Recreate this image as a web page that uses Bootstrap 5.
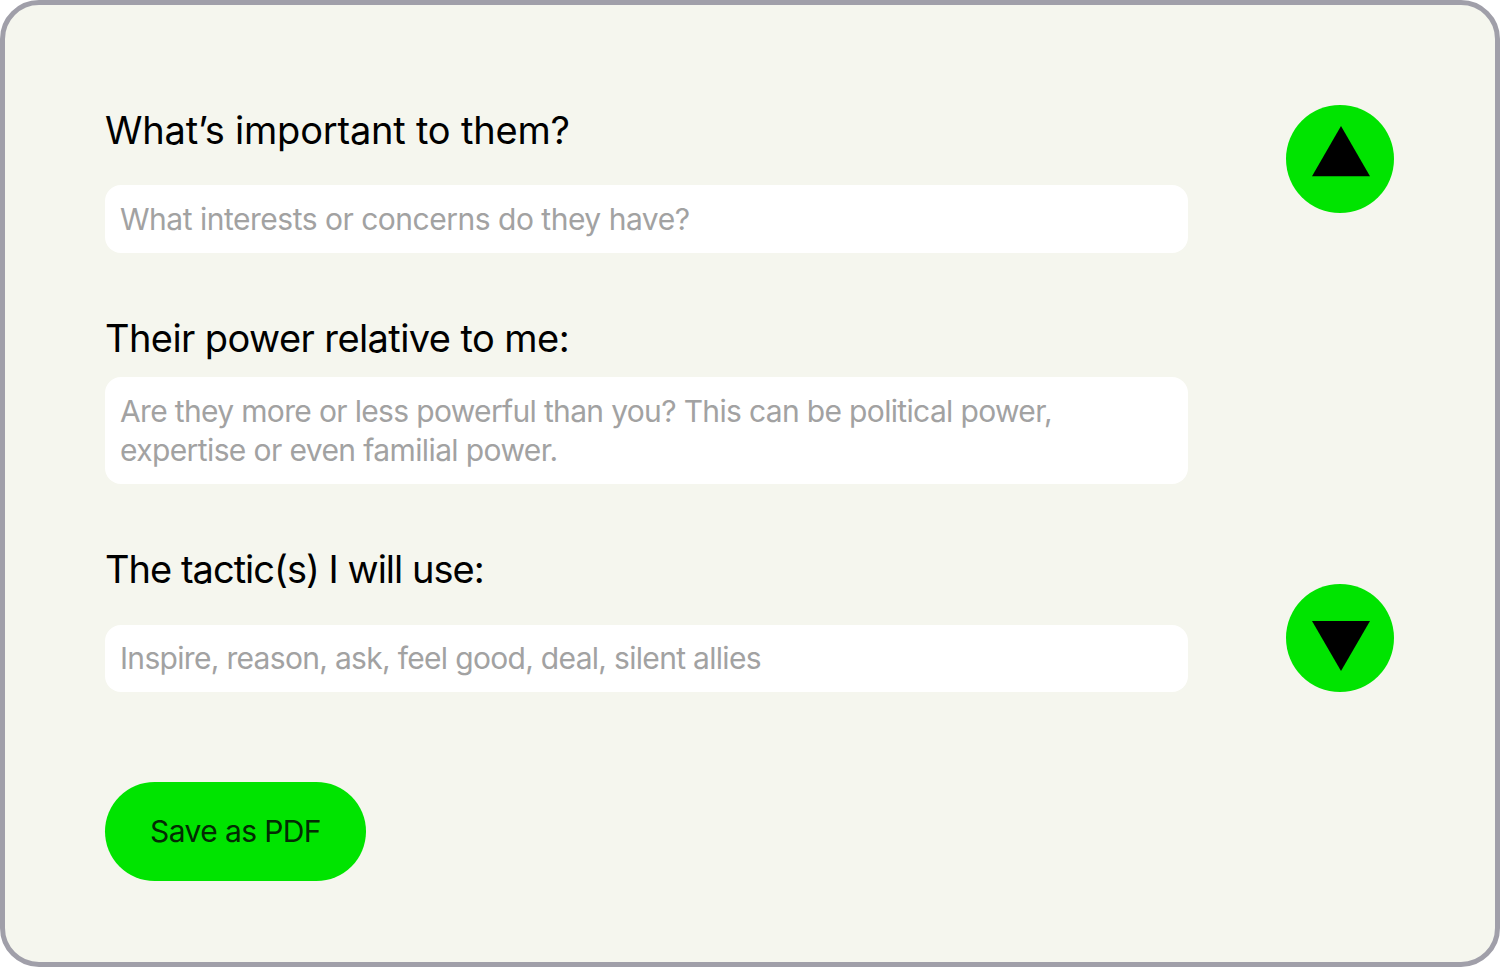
<!DOCTYPE html>
<html lang="en">
<head>
<meta charset="utf-8">
<meta name="viewport" content="width=device-width, initial-scale=1">
<title>Stakeholder planner</title>
<link href="https://cdn.jsdelivr.net/npm/bootstrap@5.3.0/dist/css/bootstrap.min.css" rel="stylesheet">
<style>
  body { font-family: Inter, "Liberation Sans", sans-serif; background: #fff; }
  .planner { height: 967px; border: 5px solid #a09fa9; border-radius: 39px; background: #f5f6ee; padding: 99px 101px 0 100px; overflow: hidden; }
  .fields { width: 1083px; }
  .question { font-size: 38px; line-height: 52px; color: #000; white-space: nowrap; font-weight: 400; }
  .answer { border: 0; border-radius: 16px; background: #fff; color: #a2a2a2; font-size: 30px; line-height: 38.5px; padding: 15px 15px; }
  .q1 { letter-spacing: -.2px; margin-bottom: 29px; }
  .q2 { letter-spacing: -.58px; margin: 59px 0 13px; }
  .q3 { letter-spacing: -.98px; margin: 59px 0 30px; }
  .a1 { height: 68px; }
  .a2 { height: 107px; }
  .a3 { height: 67px; padding-top: 14px; }
  .t1 { letter-spacing: -.49px; }
  .t2 { letter-spacing: -.66px; }
  .t3 { letter-spacing: -.61px; }
  .t4 { letter-spacing: -.69px; }
  .arrows { padding-top: 1px; }
  .arrow-btn { width: 108px; height: 108px; background: #00e400; }
  .save-btn { width: 261px; height: 99px; margin-top: 90px; background: #00e400; color: #032b03; font-size: 30px; letter-spacing: -.6px; }
  .save-btn:hover { background: #00d200; }
</style>
</head>
<body>
<main class="planner">
  <div class="d-flex justify-content-between">
    <form class="fields">
      <h2 class="question q1">What’s important to them?</h2>
      <div class="form-control answer a1" role="textbox"><span class="t1">What interests or concerns do they have?</span></div>
      <h2 class="question q2">Their power relative to me:</h2>
      <div class="form-control answer a2" role="textbox"><span class="t2">Are they more or less powerful than you? This can be political power,</span><br><span class="t3">expertise or even familial power.</span></div>
      <h2 class="question q3">The tactic(s) I will use:</h2>
      <div class="form-control answer a3" role="textbox"><span class="t4">Inspire, reason, ask, feel good, deal, silent allies</span></div>
    </form>
    <div class="arrows d-flex flex-column justify-content-between">
      <button type="button" class="btn arrow-btn rounded-circle border-0 p-0" aria-label="Previous">
        <svg class="d-block" width="108" height="108" viewBox="0 0 108 108"><path d="M55 21 84 71.2H26z"/></svg>
      </button>
      <button type="button" class="btn arrow-btn rounded-circle border-0 p-0" aria-label="Next">
        <svg class="d-block" width="108" height="108" viewBox="0 0 108 108"><path d="M26 37h58L55 87z"/></svg>
      </button>
    </div>
  </div>
  <button type="button" class="btn save-btn rounded-pill border-0 p-0">Save as PDF</button>
</main>
<script src="https://cdn.jsdelivr.net/npm/bootstrap@5.3.0/dist/js/bootstrap.bundle.min.js"></script>
</body>
</html>
